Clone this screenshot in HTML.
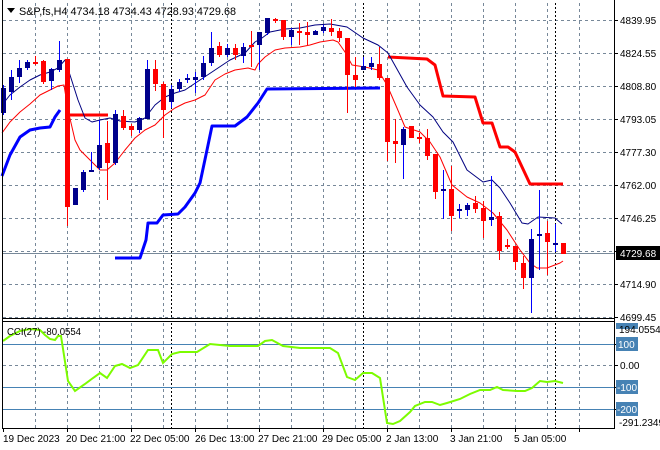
<!DOCTYPE html>
<html><head><meta charset="utf-8"><style>
html,body{margin:0;padding:0;background:#fff;width:660px;height:450px;overflow:hidden}
svg{display:block;font-family:"Liberation Sans",sans-serif;font-size:10px}
</style></head><body>
<svg id="s" width="660" height="450" viewBox="0 0 660 450" xmlns="http://www.w3.org/2000/svg">
<rect width="660" height="450" fill="#fff"/>
<g id="grid" stroke="#778899" stroke-width="1" stroke-dasharray="3,3" shape-rendering="crispEdges"></g>
<g stroke="#000" stroke-dasharray="2,2" shape-rendering="crispEdges">
<line x1="171.5" y1="3" x2="171.5" y2="317"/><line x1="363.5" y1="3" x2="363.5" y2="317"/><line x1="555.5" y1="3" x2="555.5" y2="317"/>
<line x1="171.5" y1="323" x2="171.5" y2="428"/><line x1="363.5" y1="323" x2="363.5" y2="428"/><line x1="555.5" y1="323" x2="555.5" y2="428"/>
</g>
<g stroke="#4682b4" shape-rendering="crispEdges">
<line x1="3" y1="344.5" x2="614" y2="344.5"/><line x1="3" y1="387.5" x2="614" y2="387.5"/><line x1="3" y1="409.5" x2="614" y2="409.5"/>
</g>
<line x1="3" y1="253.5" x2="614" y2="253.5" stroke="#778899" shape-rendering="crispEdges"/>
<g fill="none" stroke-linejoin="round">
<polyline stroke="#0000ff" stroke-width="3" points="2,176 10,155 20,137 30,130 40,128 50,127 55,117 60,110"/>
<polyline stroke="#0000ff" stroke-width="3" points="115,258 140,258 146,240 148,223 157,223 163,215 178,214 185,207 195,193 200,183 207,150 212,126 235,126 247,117 258,103 267,89 380,88"/>
<polyline stroke="#ff0000" stroke-width="3" points="68,115 108,115"/>
<polyline stroke="#ff0000" stroke-width="3" points="388,57 427,59 435,65 443,96 475,97 483,123 492,123 500,147 508,147 515,152 530,184 563,184"/>
<polyline stroke="#000080" stroke-width="1" points="2,105 10,95 20,87 30,80 40,75 50,72 58,68 65,60 70,75 78,100 85,118 92,122 100,120 110,118 120,121 135,122 145,118 155,105 165,97 175,93 185,90 200,80 215,70 230,60 245,53 255,42 262,38 270,32 285,29 300,28 315,25 330,24 347,27 363,38 378,45 388,53 407,87 420,105 433,117 443,132 453,142 467,170 483,182 492,180 500,188 510,203 522,223 528,224 538,217 555,218 562,224"/>
<polyline stroke="#ff0000" stroke-width="1" points="2,133 10,122 20,112 30,104 40,95 50,90 58,86 64,85 68,110 75,140 80,150 90,160 100,170 107,170 115,163 125,150 135,138 145,130 155,125 165,115 175,108 185,103 195,100 205,95 215,80 225,74 235,70 248,68 255,70 258,64 265,57 275,50 285,48 300,47 310,45 320,42 333,40 338,42 345,52 352,65 365,67 378,70 387,85 397,108 405,127 420,132 430,142 440,157 452,185 467,197 480,203 493,213 507,230 520,250 530,263 537,268 547,268 560,263 563,261"/>
</g>
<g id="candles" shape-rendering="crispEdges"></g>
<polyline fill="none" stroke="#7cfc00" stroke-width="2" points="3,341 10,336 20,331 30,329 40,330 45,335 50,339 55,340 58,336 61,336 68,381 75,391 85,384 93,378 100,373 107,378 115,366 122,364 130,368 138,365 148,350 158,350 163,363 172,354 180,352 197,352 210,344 220,345 230,346 258,346 265,341 272,340 283,346 300,348 330,348 338,353 347,377 355,380 363,373 372,373 380,378 387,423 393,424 400,421 410,412 415,406 425,402 432,402 440,405 447,403 460,399 470,394 480,390 490,390 497,387 503,390 517,391 525,391 532,388 540,381 547,382 555,381 563,383"/>
<g stroke="#000" shape-rendering="crispEdges">
<line x1="2.5" y1="0" x2="2.5" y2="429"/><line x1="614.5" y1="0" x2="614.5" y2="429"/>
<line x1="2" y1="318.5" x2="615" y2="318.5"/><line x1="2" y1="321.5" x2="615" y2="321.5"/><line x1="2" y1="428.5" x2="615" y2="428.5"/>
</g>
<g id="ticks" stroke="#000" shape-rendering="crispEdges"></g>
<path d="M7 8 L15 8 L11 13 Z" fill="#000"/>
<text x="19" y="15" fill="#000" font-size="11" textLength="217" lengthAdjust="spacingAndGlyphs">S&amp;P,fs,H4  4734.18 4734.43 4728.93 4729.68</text>
<text x="7" y="335" fill="#000" textLength="74" lengthAdjust="spacingAndGlyphs">CCI(27) -80.0554</text>
<g fill="#000">
<text x="620" y="24">4839.95</text><text x="620" y="57">4824.55</text><text x="620" y="90">4808.80</text>
<text x="620" y="123">4793.05</text><text x="620" y="156">4777.30</text><text x="620" y="189">4762.00</text>
<text x="620" y="222">4746.25</text><text x="620" y="288">4714.90</text><text x="620" y="321">4699.45</text>
</g>
<rect x="616" y="246" width="44" height="14" fill="#000"/>
<text x="620" y="257" fill="#fff">4729.68</text>
<rect x="616" y="323" width="22" height="6" fill="#4682b4"/>
<text x="619" y="333" fill="#000">194.0554</text>
<rect x="616" y="337" width="22" height="14" fill="#4682b4"/><text x="618" y="348" fill="#fff">100</text>
<text x="620" y="369" fill="#000">0.00</text>
<rect x="616" y="380" width="22" height="14" fill="#4682b4"/><text x="617" y="391" fill="#fff">-100</text>
<rect x="616" y="402" width="22" height="14" fill="#4682b4"/><text x="617" y="413" fill="#fff">-200</text>
<text x="619" y="426" fill="#000">-291.2349</text>
<g fill="#000">
<text x="3" y="442">19 Dec 2023</text><text x="66" y="442">20 Dec 21:00</text><text x="130" y="442">22 Dec 05:00</text>
<text x="195" y="442">26 Dec 13:00</text><text x="258" y="442">27 Dec 21:00</text><text x="322" y="442">29 Dec 05:00</text>
<text x="386" y="442">2 Jan 13:00</text><text x="450" y="442">3 Jan 21:00</text><text x="514" y="442">5 Jan 05:00</text>
</g>
</svg>
<script>
var NS="http://www.w3.org/2000/svg";
function el(p,t,a){var e=document.createElementNS(NS,t);for(var k in a)e.setAttribute(k,a[k]);p.appendChild(e);return e;}
var g=document.getElementById("grid");
var hy=[20,53,86,119,152,185,218,251,284,317];
hy.forEach(function(y){el(g,"line",{x1:3,y1:y+.5,x2:614,y2:y+.5});});
el(g,"line",{x1:3,y1:365.5,x2:614,y2:365.5});
for(var x=35;x<=595;x+=32){if(x==163+8||x==355+8)continue;el(g,"line",{x1:x+.5,y1:3,x2:x+.5,y2:317});el(g,"line",{x1:x+.5,y1:323,x2:x+.5,y2:428});}
var tk=document.getElementById("ticks");
hy.forEach(function(y){el(tk,"line",{x1:614,y1:y+.5,x2:618,y2:y+.5});});
[344,365,387,409].forEach(function(y){el(tk,"line",{x1:614,y1:y+.5,x2:618,y2:y+.5});});
for(var x=3;x<=600;x+=64){el(tk,"line",{x1:x+.5,y1:428,x2:x+.5,y2:432});}
var R={35:[62,63,56,65],43:[61,82,60,84],67:[59,207,59,226],107:[143,163,121,200],123:[116,128,110,130],131:[126,130,124,136],155:[69,84,60,91],163:[84,110,82,138],219:[46,55,42,57],235:[48,55,44,60],251:[45,47,31,67],275:[19,21,18,23],283:[20,37,20,40],299:[31,33,23,45],307:[32,35,22,45],331:[28,32,19,36],339:[31,38,28,42],347:[38,75,38,113],355:[75,80,57,87],379:[64,78,47,80],387:[78,142,78,161],395:[141,144,119,163],411:[126,138,126,138],419:[137,139,133,143],427:[138,156,129,160],435:[154,192,154,199],451:[189,216,166,231],475:[203,209,196,213],483:[208,221,201,238],499:[216,251,212,260],507:[245,247,239,249],515:[246,262,246,270],523:[263,278,256,289],547:[233,242,221,275],563:[243,254,243,254]};
var B={3:[88,113,85,115],11:[77,92,70,100],19:[68,77,60,83],27:[62,68,60,70],51:[69,81,68,90],59:[60,70,41,72],75:[188,205,188,205],83:[172,190,170,192],91:[170,172,152,172],99:[145,168,120,170],115:[114,163,110,165],139:[118,130,117,133],147:[69,119,60,119],171:[89,102,85,108],179:[82,89,79,92],187:[78,80,74,83],195:[77,80,72,93],203:[63,77,56,80],211:[48,63,32,66],227:[48,55,44,57],243:[47,56,43,63],259:[32,45,32,70],267:[18,33,18,35],291:[30,37,28,45],315:[31,35,30,35],323:[27,31,25,33],363:[66,70,57,70],371:[63,67,57,70],403:[129,145,127,179],443:[189,191,170,219],459:[209,211,204,218],467:[205,210,203,216],491:[217,220,176,226],531:[239,278,229,313],539:[234,235,190,270],555:[243,244,224,252]};
var c=document.getElementById("candles");
function draw(D,wick,fill){for(var k in D){var x=+k,d=D[k];
el(c,"line",{x1:x+.5,y1:d[2],x2:x+.5,y2:d[3],stroke:wick});
el(c,"rect",{x:x-2,y:d[0],width:5,height:Math.max(2,d[1]-d[0]),fill:fill,stroke:wick,"stroke-width":0});}}
draw(R,"#ff0000","#ff0000");draw(B,"#0000ff","#00008b");
</script>
</body></html>
